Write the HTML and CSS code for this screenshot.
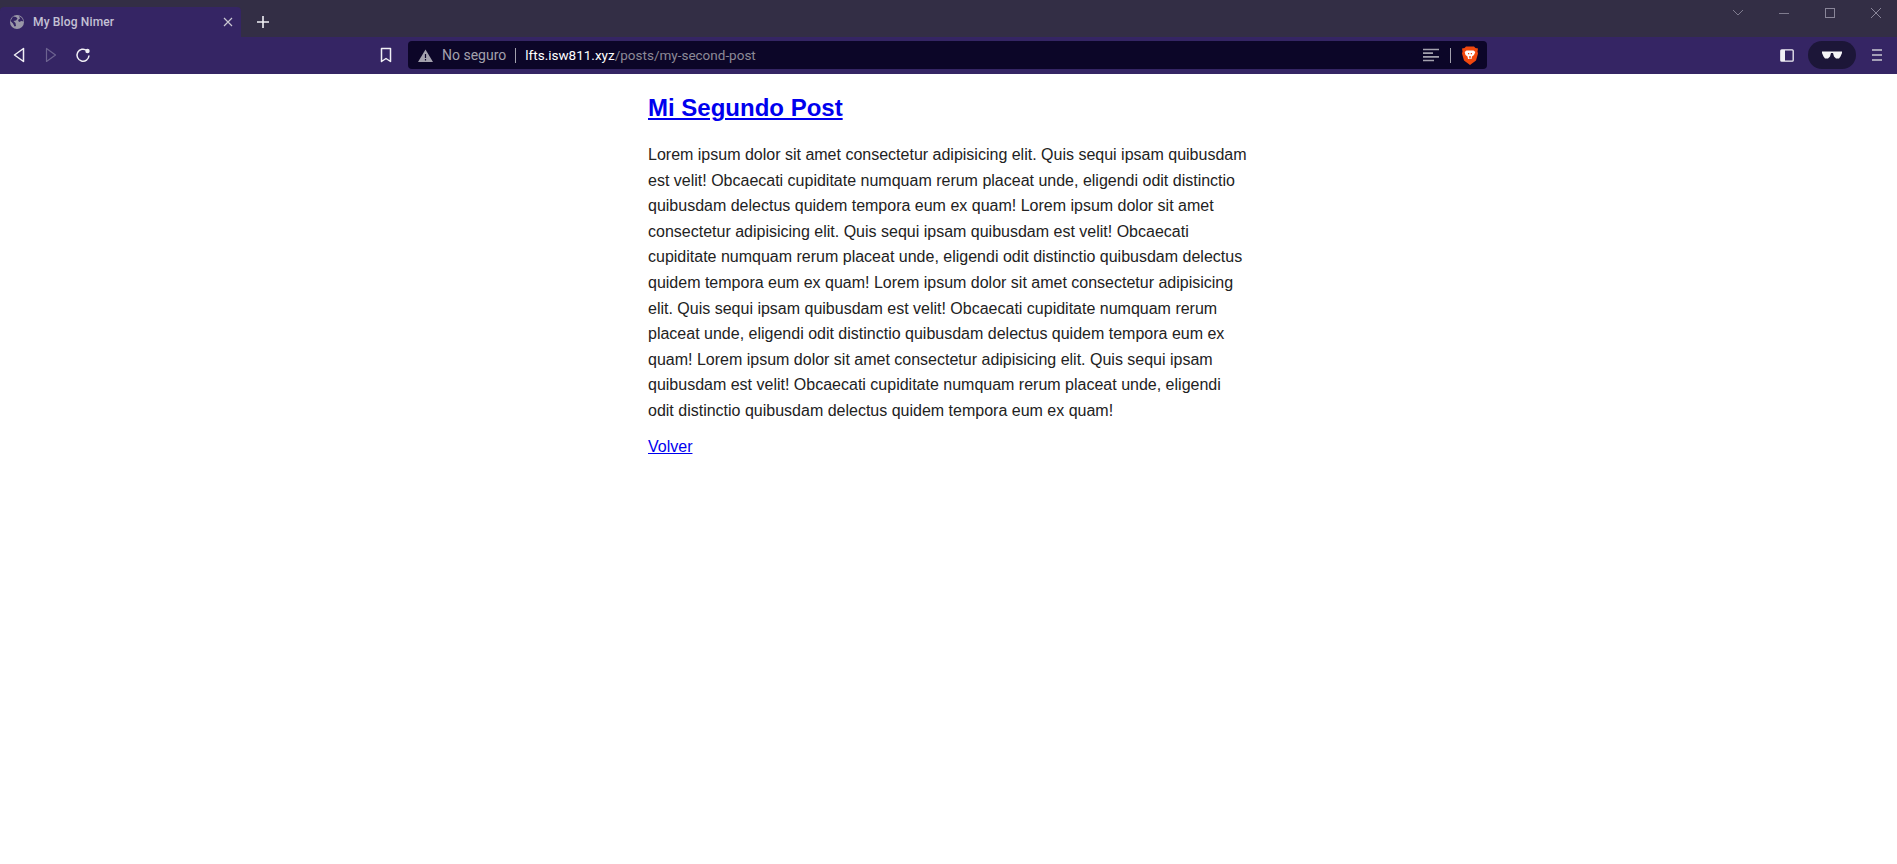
FILE: index.html
```html
<!DOCTYPE html>
<html lang="es">
<head>
    <meta charset="UTF-8">
    <meta name="viewport" content="width=device-width, initial-scale=1.0">
    <title>My Blog Nimer</title>
    <link rel="stylesheet" href="styles.css">
</head>
<body>
    <div class="browser">
        <div class="tabstrip">
            <div class="tab">
                <svg class="globe" width="16" height="16" viewBox="0 0 16 16"><circle cx="8" cy="8" r="7" fill="#9a97a8"/><path d="M4 2.500l3 0.500 1.500 1.500-1.500 2-2.500 0.500 2 2 0.500 3-1.500 0.500-1.500-3L1.500 7zM10 2l3 2 1.500 3.500-2-0.500-2.500 1-1-2 2-1.500z" fill="#352564"/></svg>
                <span class="tab-title">My Blog Nimer</span>
                <svg class="tab-close" width="10" height="10" viewBox="0 0 10 10"><path d="M1 1l8 8M9 1l-8 8" stroke="#c9c7d2" stroke-width="1.200"/></svg>
            </div>
            <svg class="new-tab" width="14" height="14" viewBox="0 0 14 14"><path d="M7 1v12M1 7h12" stroke="#f1f0f5" stroke-width="1.600"/></svg>
            <div class="window-btns">
                <svg width="12" height="12" viewBox="0 0 12 12"><path d="M1 3l5 5 5-5" fill="none" stroke="#7f7b8e" stroke-width="1"/></svg>
                <svg width="12" height="12" viewBox="0 0 12 12"><path d="M1 6.500h10" stroke="#7f7b8e" stroke-width="1"/></svg>
                <svg width="12" height="12" viewBox="0 0 12 12"><rect x="1.500" y="1.500" width="9" height="9" fill="none" stroke="#8a8699" stroke-width="1"/></svg>
                <svg width="12" height="12" viewBox="0 0 12 12"><path d="M1 1l10 10M11 1L1 11" stroke="#8a8699" stroke-width="1"/></svg>
            </div>
        </div>
        <div class="toolbar">
            <div class="nav-btns">
                <svg width="12" height="16" viewBox="0 0 12 16"><path d="M10.500 1.500v13L1.500 8z" fill="none" stroke="#f1f0f5" stroke-width="1.500" stroke-linejoin="round"/></svg>
                <svg width="12" height="16" viewBox="0 0 12 16"><path d="M1.500 1.500v13l9-6.500z" fill="none" stroke="#6d6390" stroke-width="1.200" stroke-linejoin="round"/></svg>
                <svg width="16" height="16" viewBox="0 0 16 16"><path d="M14 8.500a6 6 0 1 1-2.200-5" fill="none" stroke="#f1f0f5" stroke-width="1.500"/><circle cx="12.500" cy="4" r="2.200" fill="#f1f0f5"/></svg>
            </div>
            <svg class="bookmark" width="12" height="16" viewBox="0 0 12 16"><path d="M1.500 1.500h9v13L6 11.500l-4.500 3z" fill="none" stroke="#f1f0f5" stroke-width="1.500" stroke-linejoin="round"/></svg>
            <div class="urlbar">
                <svg width="15" height="13" viewBox="0 0 15 13"><path d="M7.500 0.500L15 13H0z" fill="#a3a1ad"/><path d="M7.500 5v4M7.500 10v1.500" stroke="#0c0628" stroke-width="1.200"/></svg>
                <span class="not-secure">No seguro</span>
                <span class="url-sep"></span>
                <span class="url"><span class="host">lfts.isw811.xyz</span>/posts/my-second-post</span>
                <span class="url-tools">
                    <svg width="16" height="14" viewBox="0 0 16 14"><path d="M0 1.500h16M0 5.200h10M0 8.800h16M0 12.500h11" stroke="#a3a1ad" stroke-width="1.700"/></svg>
                    <span class="url-sep tools-sep"></span>
                    <svg width="16" height="19" viewBox="0 0 16 19"><path d="M4 0.500h8l1.500 1.500 2.500 0.500-0.500 3 0.500 2-2 7-6 4.500-6-4.500-2-7 0.500-2-0.500-3L2.500 2z" fill="#f1480e"/><path d="M4.500 4.500h7l1.800 1.500-1.300 3-2 1.500-0.500 2.500H6L5.500 10.500l-2-1.500-0.800-3z" fill="#fff"/><path d="M6 7h1.200v1.200H6zM8.800 7H10v1.200H8.800zM7.300 10h1.400v2.500H7.300z" fill="#f1480e"/></svg>
                </span>
            </div>
            <div class="side-btns">
                <svg width="14" height="13" viewBox="0 0 14 13"><rect x="0.800" y="0.800" width="12.400" height="11.400" rx="1" fill="none" stroke="#f1f0f5" stroke-width="1.300"/><rect x="1" y="1" width="4" height="11" fill="#f1f0f5"/></svg>
                <div class="vpn-pill">
                    <svg width="20" height="8" viewBox="0 0 20 8"><path d="M0 0.500h20v1.500l-1.500 3.500-1.500 2h-3l-2-2-1-3.500H9l-1 3.500-2 2H3L1.500 5.500 0 2z" fill="#f6f5f8"/></svg>
                </div>
                <svg width="10" height="12" viewBox="0 0 10 12"><path d="M0 1h10M0 6h10M0 11h10" stroke="#c9c7d2" stroke-width="1.500"/></svg>
            </div>
        </div>
    </div>
    <main class="post">
        <h1 class="post-title"><a href="#">Mi Segundo Post</a></h1>
        <p class="post-body">Lorem ipsum dolor sit amet consectetur adipisicing elit. Quis sequi ipsam quibusdam est velit! Obcaecati cupiditate numquam rerum placeat unde, eligendi odit distinctio quibusdam delectus quidem tempora eum ex quam! Lorem ipsum dolor sit amet consectetur adipisicing elit. Quis sequi ipsam quibusdam est velit! Obcaecati cupiditate numquam rerum placeat unde, eligendi odit distinctio quibusdam delectus quidem tempora eum ex quam! Lorem ipsum dolor sit amet consectetur adipisicing elit. Quis sequi ipsam quibusdam est velit! Obcaecati cupiditate numquam rerum placeat unde, eligendi odit distinctio quibusdam delectus quidem tempora eum ex quam! Lorem ipsum dolor sit amet consectetur adipisicing elit. Quis sequi ipsam quibusdam est velit! Obcaecati cupiditate numquam rerum placeat unde, eligendi odit distinctio quibusdam delectus quidem tempora eum ex quam!</p>
        <a class="back-link" href="#">Volver</a>
    </main>
</body>
</html>
```
FILE: styles.css
```css
body {
    margin: 0;
    background-color: #fff;
    font-family: "Liberation Sans", Arial, sans-serif;
}

/* browser chrome */
.browser {
    height: 74px;
    font-family: "Roboto", "Liberation Sans", sans-serif;
}

.tabstrip {
    display: flex;
    align-items: flex-end;
    height: 37px;
    background-color: #332e45;
}

.tab {
    display: flex;
    align-items: center;
    box-sizing: border-box;
    width: 241px;
    height: 30px;
    padding: 0 8px 0 9px;
    border-radius: 4px 4px 0 0;
    background-color: #352564;
}

.tab-title {
    flex: 1;
    margin-left: 8px;
    color: #c4c1d4;
    font-size: 12px;
    font-weight: 500;
    letter-spacing: 0.15px;
}

.new-tab {
    margin: 0 0 8px 15px;
}

.window-btns {
    display: flex;
    gap: 34px;
    align-self: flex-start;
    margin: 7px 15px 0 auto;
}

.toolbar {
    display: flex;
    align-items: center;
    box-sizing: border-box;
    height: 37px;
    padding-bottom: 1px;
    background-color: #352564;
}

.nav-btns {
    display: flex;
    align-items: center;
    gap: 20px;
    margin-left: 13px;
}

.nav-btns svg:last-child {
    margin-left: -2px;
}

.bookmark {
    margin-left: 289px;
}

.urlbar {
    display: flex;
    align-items: center;
    box-sizing: border-box;
    width: 1079px;
    height: 28px;
    margin-left: 16px;
    padding: 0 9px 0 10px;
    border-radius: 4px;
    background-color: #0c0628;
    color: #8c8a97;
    font-size: 13.500px;
}

.not-secure {
    margin-left: 9px;
    color: #a3a1ad;
    font-size: 14px;
}

.url-sep {
    width: 1px;
    height: 15px;
    margin: 0 9px;
    background-color: #a3a1ad;
}

.tools-sep {
    margin: 0 11px;
}

.host {
    color: #fff;
}

.url-tools {
    display: flex;
    align-items: center;
    margin-left: auto;
}

.side-btns {
    display: flex;
    align-items: center;
    margin-left: auto;
    margin-right: 15px;
}

.vpn-pill {
    display: flex;
    align-items: center;
    justify-content: center;
    width: 48px;
    height: 28px;
    margin: 0 16px 0 14px;
    border-radius: 14px;
    background-color: #1c1638;
}

/* post */
.post {
    width: 600px;
    margin: 0 auto;
    padding: 20px 1px 0 0;
    color: #222;
    font-size: 16px;
    line-height: 25.600px;
}

.post-title {
    margin: 0 0 20px;
    font-size: 24px;
    line-height: 28px;
}

.post-title a,
.back-link {
    color: #00e;
}

.post-body {
    margin: 0 0 10px;
}
```
